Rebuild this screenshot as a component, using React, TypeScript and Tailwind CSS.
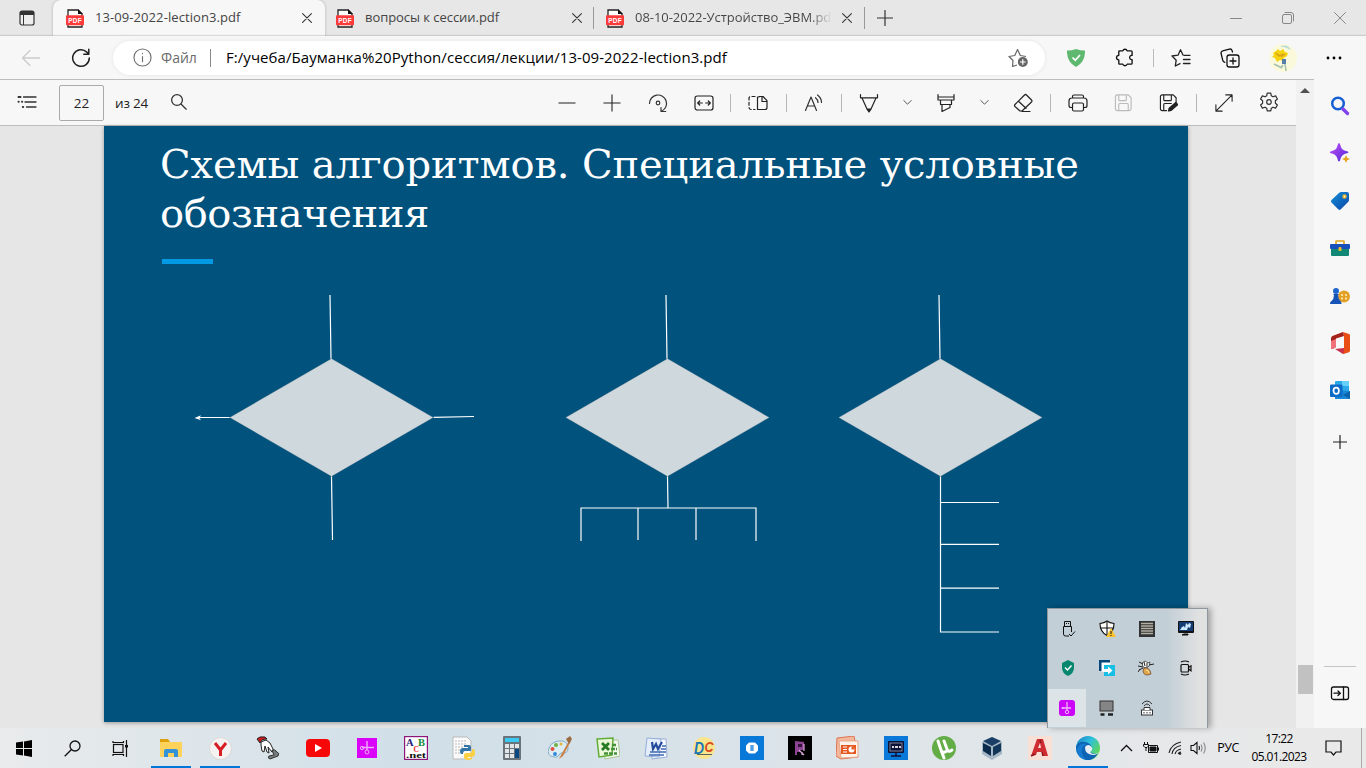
import React from "react";

type IconProps = { children: React.ReactNode; s?: number; c?: string; w?: number; vb?: string; className?: string };

function Ico({ children, s = 20, c = "#333", w = 1.2, vb = "0 0 20 20", className = "" }: IconProps) {
  return (
    <svg width={s} height={s} viewBox={vb} fill="none" stroke={c} strokeWidth={w} strokeLinecap="round" strokeLinejoin="round" className={`shrink-0 ${className}`}>
      {children}
    </svg>
  );
}

function Cell({ className = "", children }: { className?: string; children?: React.ReactNode }) {
  return <div className={`flex h-full shrink-0 items-center justify-center ${className}`}>{children}</div>;
}

function PdfIcon() {
  return (
    <svg width="18" height="19" viewBox="0 0 18 19" className="shrink-0">
      <path d="M2 9V1h10l4 4v4" fill="#fff" stroke="#222" strokeWidth="1.3" />
      <path d="M12 0l5 5h-5z" fill="#111" />
      <path d="M2 15v3h14v-3" fill="#fff" stroke="#222" strokeWidth="1.3" />
      <rect x="0" y="6.3" width="18" height="10" rx="0.8" fill="#fb3a3c" />
      <text x="9" y="13.6" fontSize="6.4" fontWeight="700" textAnchor="middle" fill="#fff" fontFamily="Liberation Sans, sans-serif" textLength="13.500">PDF</text>
    </svg>
  );
}

function Close() {
  return (
    <Ico s={10} vb="0 0 10 10" c="#333" w={1.1}>
      <path d="M.6.6l8.8 8.8M9.4.6L.6 9.4" />
    </Ico>
  );
}

function TabBar() {
  return (
    <div className="flex h-9 shrink-0 bg-[#e7e7e7] text-[13px] text-[#444]">
      <Cell className="w-[53px]">
        <svg width="16" height="16" viewBox="0 0 16 16">
          <rect x="1" y="1" width="14" height="14" rx="2" fill="#fff" fillOpacity=".3" stroke="#333" strokeWidth="1.2" />
          <path d="M1 4V2.500Q1 1 2.500 1h11Q15 1 15 2.500V5H1z" fill="#333" />
          <path d="M4.500 5v10" stroke="#333" />
        </svg>
      </Cell>
      <div className="flex w-[272px] items-center rounded-t-lg bg-[#f7f7f7] pl-[13px] shadow-[0_0_3px_rgba(0,0,0,0.25)]">
        <PdfIcon />
        <span className="ml-[11px] w-[207px] whitespace-nowrap tracking-[0.08px]">13-09-2022-lection3.pdf</span>
        <Close />
      </div>
      <div className="flex w-[268px] items-center pl-[11px]">
        <PdfIcon />
        <span className="ml-[11px] w-[207px] whitespace-nowrap tracking-[-0.05px]">вопросы к сессии.pdf</span>
        <Close />
      </div>
      <div className="my-[7px] w-px bg-[#999]" />
      <div className="flex w-[270px] items-center pl-3">
        <PdfIcon />
        <span className="ml-[11px] mr-[10px] w-[197px] overflow-hidden whitespace-nowrap bg-linear-to-r from-[#444] from-88% to-[#e7e7e7] bg-clip-text tracking-[-0.04px] text-transparent">08-10-2022-Устройство_ЭВМ.pdf</span>
        <Close />
      </div>
      <div className="my-[7px] w-px bg-[#999]" />
      <Cell className="w-[39px]">
        <Ico s={16} vb="0 0 16 16" w={1.2}><path d="M8 .5v15M.5 8h15" /></Ico>
      </Cell>
      <div className="grow" />
      <Cell className="w-[53px]"><Ico s={12} vb="0 0 12 12" c="#888" w={1}><path d="M.5 6.500h11" /></Ico></Cell>
      <Cell className="w-[52px]"><Ico s={12} vb="0 0 12 12" c="#888" w={1}><rect x=".5" y="2.500" width="9" height="9" rx="1.5" /><path d="M3 .5h6Q11.500.5 11.500 3v6" /></Ico></Cell>
      <Cell className="w-[52px]"><Ico s={12} vb="0 0 12 12" c="#888" w={1}><path d="M.5.5l11 11M11.500.5l-11 11" /></Ico></Cell>
    </div>
  );
}

function AddressBar() {
  return (
    <div className="flex h-[43px] shrink-0 items-center bg-[#f7f7f7] shadow-[0_-1px_1px_rgba(0,0,0,0.12)]">
      <Cell className="w-[62px]"><Ico c="#ccc" w={1.3}><path d="M18.500 10H1.500M9 2.500L1.500 10 9 17.500" /></Ico></Cell>
      <Cell className="w-[38px]"><Ico c="#222" w={1.5}><path d="M18.300 10A8.300 8.300 0 1 1 15.800 4.100L17.500 6M17.800 1.200V6.200H12.800" /></Ico></Cell>
      <div className="ml-[13px] flex h-[34px] w-[932px] items-center rounded-full bg-white pl-5 shadow-[0_0_4px_rgba(0,0,0,0.08)]">
        <Ico s={19} c="#707070"><circle cx="10" cy="10" r="9" /><path d="M10 9v5.500M10 5.700v.4" /></Ico>
        <span className="ml-[9px] w-[49px] text-sm text-[#6b6b6b]">Файл</span>
        <div className="h-[18px] w-px bg-[#888]" />
        <span className="ml-[15px] whitespace-nowrap text-[15px] tracking-[0.06px] text-black">F:/учеба/Бауманка%20Python/сессия/лекции/13-09-2022-lection3.pdf</span>
        <svg width="21" height="20" viewBox="0 0 21 20" className="ml-auto mr-4" fill="none" stroke="#666" strokeWidth="1.2" strokeLinejoin="round">
          <path d="M9 17L4.500 18.500 5 12.500 1 8.500 6.800 7.500 9.500 1.500 12.300 7.500 18 8.500" />
          <circle cx="14.800" cy="14" r="5" fill="#666" stroke="none" />
          <path d="M14.800 11.200v5.600M12 14h5.600" stroke="#fff" />
        </svg>
      </div>
      <Cell className="w-[62px]">
        <svg width="18" height="18" viewBox="0 0 18 18">
          <path d="M9 0Q13 1.500 18 1.500Q18.500 13 9 18Q-.5 13 0 1.500Q5 1.500 9 0" fill="#5fb870" />
          <path d="M5.500 8.500L8.300 11.200 13 6" fill="none" stroke="#fff" strokeWidth="1.7" />
        </svg>
      </Cell>
      <Cell className="w-[38px] pr-1"><Ico s={19} c="#111" w={1.4}><path d="M5 3h3.200a2.400 2.400 0 0 1 4.600 0H17q1 0 1 1v3.800h-.8a2.300 2.300 0 0 0 0 4.500H18V16q0 1-1 1h-4.200a2.400 2.400 0 0 1-4.600 0H5q-1 0-1-1v-3.500a2.400 2.400 0 0 1 0-4.800V4q0-1 1-1z" /></Ico></Cell>
      <Cell className="w-4"><div className="h-[18px] w-px bg-[#bbb]" /></Cell>
      <Cell className="w-10"><Ico c="#222" w={1.3}><path d="M12 7L9.500 1.800 7 7.200 1 8 5.200 12.200 4.300 18 9 15.600M13 7.300h6M12.500 11.500h6.500M12.500 15.500h6.500" /></Ico></Cell>
      <Cell className="w-[58px]"><Ico c="#111" w={1.3}><rect x="7" y="7" width="12" height="12" rx="2.3" /><path d="M13 10v6M10 13h6M4.800 14.300Q3 14 2.700 12.200L1.100 5.500Q.7 3.300 2.700 2.800L9.300 1.100Q11.500.6 12.100 2.600L12.500 4" /></Ico></Cell>
      <Cell className="w-12">
        <svg width="28" height="28" viewBox="0 0 28 28">
          <circle cx="14" cy="14" r="14" fill="#fbf9dc" />
          <path d="M11 3Q18-1 22 6L15 3z" fill="#b9dcd3" />
          <path d="M4 9l3-2 2-2 2 2 3-2 2 3 3 1-1 3-3 2-1 3-3-1-3 2-2-4-3-1 2-2z" fill="#f4d411" />
          <path d="M7 9l3 3 4-2M12 13l4-3" stroke="#d89c19" strokeWidth="1.3" fill="none" />
          <path d="M13 15l4 0 0 5-4 0z" fill="#587dad" />
          <path d="M16 20l1 7M5 20l8 4M14 21l-2 3" stroke="#a3bfae" strokeWidth="1.500" />
        </svg>
      </Cell>
      <Cell className="w-[54px]"><svg width="16" height="4"><circle cx="2" cy="2" r="1.400" /><circle cx="8" cy="2" r="1.400" /><circle cx="14" cy="2" r="1.400" /></svg></Cell>
    </div>
  );
}

function Sep() {
  return <div className="h-[18px] w-px bg-[#b5b5b5]" />;
}

function Chevron() {
  return <Ico s={9} vb="0 0 9 9" c="#555" w={1}><path d="M.8 2.500l3.700 3.700L8.200 2.500" /></Ico>;
}

function PdfToolbar() {
  return (
    <div className="flex h-[47px] w-[1296px] shrink-0 items-center border-y border-[#bdbdbd] bg-[#f7f7f7] text-[13.500px] text-[#222]">
      <Cell className="w-[54px] pb-0.5"><Ico c="#333" w={1.3}><path d="M6.500 5h12.500M8 10h11M9.500 15h9.500" /><path d="M1.500 5h2M1.500 9.800h.2M5 9.800h.2M5.800 15h.4" strokeWidth="2" /></Ico></Cell>
      <div className="ml-[5px] flex h-9 w-[45px] items-center justify-center rounded-[2px] border border-[#aaa] pt-0.5">22</div>
      <span className="ml-[11px] w-11 whitespace-nowrap pt-0.5 tracking-[-0.2px]">из 24</span>
      <Cell className="w-10 pb-0.5"><Ico s={18} w={1.400}><circle cx="7.800" cy="7.800" r="6" /><path d="M12.200 12.200L18 18" /></Ico></Cell>
      <div className="grow" />
      <Cell className="w-[50px]"><Ico s={18} c="#222"><path d="M1 10h18" /></Ico></Cell>
      <Cell className="w-10"><Ico s={18} c="#222"><path d="M1 10h18M10 1v18" /></Ico></Cell>
      <Cell className="w-[51px]"><Ico><path d="M1.500 10.500A8.500 8.500 0 1 1 14 18M17.700 18.500H13v-4" /><circle cx="10" cy="10" r="1.800" /></Ico></Cell>
      <Cell className="w-[41px]"><Ico c="#222"><rect x="1" y="3" width="18" height="14" rx="2.300" /><path d="M8.300 10H3.800M5.700 8L3.700 10l2 2M11.700 10h4.500M14.300 8l2 2-2 2" /></Ico></Cell>
      <Cell className="w-[13px]"><Sep /></Cell>
      <Cell className="w-[42px]"><Ico c="#222"><path d="M9.500 4H11V3.500h4L19 7.700v6.800q0 2-2 2H9.500zM14 3.700V8.500h5" /><path d="M7 3.500H3Q1 3.500 1 5.500v9q0 2 2 2h4" strokeDasharray="3 2.300" /></Ico></Cell>
      <Cell className="w-[14px]"><Sep /></Cell>
      <Cell className="w-[42px]"><Ico><path d="M1.500 17.500L7 4l5.500 13.500M3.400 13h7.200M11.500 4.700q2.500 2 2.500 4.800M13.500 2q4 3 4 7.500" /></Ico></Cell>
      <Cell className="w-3"><Sep /></Cell>
      <Cell className="w-11"><Ico c="#222"><path d="M1.500 1.500v3.300h17V1.500M3 5l5 11h4L17 5" /><path d="M8.200 16.500h3.600L10 19z" fill="#333" /></Ico></Cell>
      <Cell className="w-8"><Chevron /></Cell>
      <Cell className="w-[46px]"><Ico c="#222"><path d="M2 1.500V7h16V1.500M4.500 7v4.500h11V7M2.500 4h15M6 11.500V18.500l8-4v-3" /></Ico></Cell>
      <Cell className="w-[31px]"><Chevron /></Cell>
      <Cell className="w-[45px]"><Ico c="#222"><path d="M2 11.500L11.500 2q1-1 2 0l5 5q1 1 0 2L9 18H7L2 13.500q-1-1 0-2zM5.500 8.300l7.500 7M9 18.500h8" /></Ico></Cell>
      <Cell className="w-[11px]"><Sep /></Cell>
      <Cell className="w-11"><Ico c="#222"><path d="M4.500 5V3.500Q4.500 2 6 2h8q1.500 0 1.500 1.500V5M4.500 14.500H3q-2 0-2-2V8q0-3 3-3h12q3 0 3 3v4.500q0 2-2 2h-1.500" /><rect x="4.500" y="10" width="11" height="8" rx="1.500" /></Ico></Cell>
      <Cell className="w-[47px]"><Ico s={19} c="#bbb"><path d="M3.500 2H15l3 3v11.500q0 2-2 2H3.500q-2 0-2-2V4q0-2 2-2zM5 2v5q0 1 1 1h6q1 0 1-1V2M5 18v-6q0-1 1-1h8q1 0 1 1v6" /></Ico></Cell>
      <Cell className="w-[43px]"><Ico s={19} c="#222"><path d="M8 18.500H3.500q-2 0-2-2V4q0-2 2-2H15l3 3v5M5 2v5q0 1 1 1h6q1 0 1-1V2M5 18v-6q0-1 1-1h7" /><path d="M10 19l.7-3 7-6 2.200 2.300-7 6z" fill="#222" /></Ico></Cell>
      <Cell className="w-[13px]"><Sep /></Cell>
      <Cell className="w-[41px]"><Ico s={18} c="#222"><path d="M1 19L19 1M12 1h7v7M1 12v7h7" /></Ico></Cell>
      <Cell className="mr-0.5 w-[50px] pb-0.5"><Ico c="#333"><path d="M8.200 1.200h3.600l.5 2.600 1.700 1 2.600-.9 1.800 3.100-2 1.800v2.400l2 1.800-1.800 3.100-2.600-.9-1.700 1-.5 2.600H8.200l-.5-2.600-1.700-1-2.600.9L1.600 13l2-1.800V8.800L1.600 7l1.800-3.100 2.600.9 1.700-1z" /><circle cx="10" cy="10" r="2.300" /></Ico></Cell>
    </div>
  );
}

function Diamond({ cx }: { cx: number }) {
  return <path d={`M${cx - 102} 417.500L${cx} 358.500L${cx + 102} 417.500L${cx} 476.500z`} fill="#cfd8dd" stroke="#0a4568" strokeOpacity="0.45" strokeWidth="0.8" />;
}

function Slide() {
  return (
    <div className="ml-[104px] h-[596px] w-[1084px] shrink-0 bg-[#01527d] shadow-[0_1px_4px_rgba(0,0,0,0.35)]">
      <div className="h-[159px] pl-14 pt-[14px] text-white">
        <h1 className="whitespace-nowrap font-['Roboto_Slab','DejaVu_Serif',serif] text-[40px] leading-[49px]">
          <span className="block tracking-[-0.13px]">Схемы алгоритмов. Специальные условные</span>
          <span className="block tracking-[-0.4px]">обозначения</span>
        </h1>
        <div className="ml-0.5 mt-[21px] h-[5px] w-[51px] bg-[#0399e4]" />
      </div>
      <svg width="1084" height="437" viewBox="104 285 1084 437" fill="none" stroke="#fff" strokeWidth="1.200">
        <path d="M330 295L331 359M331.500 476L332.500 540M433.500 417.300L474 416.500M232 417.500H198" />
        <path d="M194.500 418l6.500-2.700-1.700 2.700 1.700 2.300z" fill="#fff" stroke="none" />
        <path d="M666 295L667 359M667.500 476L668 508M581 541V508H756V541M638 508v32M696 508v32" />
        <path d="M939 295L940 359M940.500 476V632H999M940.500 502.500H999M940.500 544.300H999M940.500 588.200H999" />
        <Diamond cx={331.5} />
        <Diamond cx={667.5} />
        <Diamond cx={940.5} />
      </svg>
    </div>
  );
}

function Sidebar() {
  return (
    <div className="flex w-[52px] shrink-0 flex-col items-center bg-[#f7f7f7] pt-[3px]">
      <Cell className="h-[47px]!">
        <svg width="20" height="20" viewBox="0 0 20 20" fill="none"><circle cx="8" cy="7.500" r="5.800" stroke="#1760d3" strokeWidth="2.500" /><path d="M13 13l4.500 4.500" stroke="#8143ee" strokeWidth="3.300" strokeLinecap="round" /></svg>
      </Cell>
      <Cell className="h-12!">
        <svg width="20" height="20" viewBox="0 0 20 20"><defs><linearGradient id="sp" x2="1" y2="1"><stop stopColor="#c44cf4" /><stop offset="1" stopColor="#4c2bd9" /></linearGradient></defs><path d="M9 0q1 0 1.500 2.500Q11.500 7 16 8q2.500.5 2.500 1.300T16 10.500Q11.500 11.500 10.500 16 10 18.500 9 18.500T7.500 16Q6.500 11.500 2 10.500-.3 10-.3 9.300T2 8Q6.500 7 7.500 2.500 8 0 9 0" fill="url(#sp)" /><path d="M16 12l1.200 2.800L20 16l-2.800 1.200L16 20l-1.200-2.800L12 16l2.800-1.200z" fill="#e5a51c" /></svg>
      </Cell>
      <Cell className="h-12! pb-px">
        <svg width="20" height="20" viewBox="0 0 20 20"><defs><linearGradient id="tag" x2="1" y2="1"><stop stopColor="#1690d8" /><stop offset="1" stopColor="#0b45a7" /></linearGradient></defs><path d="M11 1h6q2 0 2 2v6q0 1-.7 1.700l-7.500 7.500q-1.300 1.300-2.600 0l-6.700-6.700q-1.300-1.300 0-2.500L9.500 1.500Q10 1 11 1" fill="url(#tag)" /><circle cx="14.500" cy="5.500" r="1.500" fill="#fff" stroke="#e9b82f" strokeWidth="1.500" /></svg>
      </Cell>
      <Cell className="h-[47px]! pb-px">
        <svg width="20" height="18" viewBox="0 0 20 18"><path d="M6 5V2.500Q6 2 6.500 2h7q.5 0 .5.500V5" fill="none" stroke="#dda521" strokeWidth="1.600" /><rect x="1" y="8" width="18" height="9" rx="1" fill="#118875" /><rect x="0" y="5" width="20" height="5" rx="1" fill="#1750ba" /><rect x="8.500" y="8" width="3" height="4" rx="1" fill="#f0b72d" /></svg>
      </Cell>
      <Cell className="h-[47px]!">
        <svg width="20" height="18" viewBox="0 0 20 18"><circle cx="14" cy="9.500" r="6" fill="#e3a028" /><g fill="#fff0b5"><circle cx="12" cy="8" r="1" /><circle cx="16" cy="8" r="1" /><circle cx="12" cy="11.500" r="1" /><circle cx="16" cy="11.500" r="1" /></g><circle cx="6" cy="4" r="3" fill="#1d65cd" /><path d="M3.500 7h5v1H8q.2 4 2.500 6 1 .5 1 3H0Q0 14.500 1.500 14 4 12 4 8h-.5z" fill="#1553b7" /></svg>
      </Cell>
      <Cell className="h-[47px]!">
        <svg width="19" height="22" viewBox="0 0 19 22"><path d="M4 17l9-1 5 4-6 2z" fill="#c92f4d" /><path d="M12 0l6 2q1 .3 1 1.300v15.500q0 1-1 1.200l-6 2 1-4V4z" fill="#e94e14" /><path d="M12 0L2 3.800Q0 4.500 0 6.500v9Q0 17.500 1.500 17L4 15.800q1-.5 1-1.800V6.500L13 4z" fill="#a32219" /><path d="M0 9v6.500Q0 17.500 1.500 17L4 15.800q1-.5 1-1.800V7z" fill="#f0707c" /></svg>
      </Cell>
      <Cell className="h-[47px]!">
        <svg width="20" height="20" viewBox="0 0 20 20"><rect x="5" y="1" width="14" height="17" rx="1" fill="#29a8ea" /><rect x="12" y="1" width="7" height="5" fill="#65d0fa" /><path d="M5 10l15 1v7q0 1-1 1H5z" fill="#1688d6" /><path d="M20 11l-7 4 7 4z" fill="#0d62ac" /><rect x="0" y="4.500" width="12.500" height="12.500" rx="1" fill="#0b6bc6" /><ellipse cx="6.200" cy="10.700" rx="2.700" ry="3.100" fill="none" stroke="#fff" strokeWidth="1.700" /></svg>
      </Cell>
      <Cell className="h-[57px]!"><Ico s={14} vb="0 0 14 14" c="#222" w={1.200}><path d="M7 .5v13M.5 7h13" /></Ico></Cell>
      <div className="grow" />
      <div className="h-px w-8 bg-[#c5c5c5]" />
      <Cell className="mb-[10px] h-[51px]!">
        <Ico s={20} c="#111" w={1.300}><rect x="1.500" y="4" width="17" height="12.500" rx="2" /><path d="M13.500 4v12.500M4 10.200h6M8 8l2.300 2.200L8 12.500" /></Ico>
      </Cell>
    </div>
  );
}

function TrayPopup() {
  return (
    <div className="absolute left-[1047px] top-[608px] grid h-[120px] w-[161px] grid-cols-4 grid-rows-3 border border-b-0 border-[#8f979c] bg-linear-to-r from-[#c3cfd7] from-75% to-[#e0e1e1] to-95% pr-px shadow-[3px_0_6px_rgba(0,0,0,0.3)]">
      <Cell>
        <svg width="16" height="18" viewBox="0 0 16 18" fill="none" stroke="#111"><path d="M4.500 6V1.500h6V6M3.500 6.500h8V12M3.500 6.500V14q0 2 2 2H9M6.500 3v1M8.500 3v1M9 14l2 2 4-4.500" /></svg>
      </Cell>
      <Cell>
        <svg width="17" height="17" viewBox="0 0 17 17"><path d="M8 1Q10.500 3 15 3.500 15 12 8 15.500 1 12 1 3.500 5.500 3 8 1z" fill="#fff" stroke="#111" strokeWidth="1.100" /><path d="M8 2v13M1.500 8h13" stroke="#111" strokeWidth="1.100" /><path d="M12 8l5 9H7z" fill="#fdc22c" /><path d="M12 11v3M12 15v1" stroke="#111" /></svg>
      </Cell>
      <Cell>
        <svg width="16" height="16"><rect width="16" height="16" fill="#333" /><path d="M2 2.500h12M2 5h12M2 7.500h12M2 10h12M2 12.500h12" stroke="#b1aea4" strokeWidth="1.300" /></svg>
      </Cell>
      <Cell>
        <svg width="16" height="15"><rect width="16" height="12" rx="1" fill="#111" /><rect x="1" y="1" width="14" height="9" fill="#163d73" /><path d="M2 9l2-3 2-1 1 2 1-5 2 2 1-2 2 1-1 4-2-1-1 3z" fill="#cceaff" /><path d="M6 13h4v1H4z" stroke="#111" /></svg>
      </Cell>
      <Cell>
        <svg width="14" height="16" viewBox="0 0 14 16"><path d="M7 0l6 3v5q0 5-6 8-6-3-6-8V3z" fill="#07876f" /><path d="M4 7.500L6.500 10 10.500 5.500" stroke="#fff" strokeWidth="1.400" fill="none" /></svg>
      </Cell>
      <Cell>
        <svg width="16" height="16"><rect width="11" height="11" fill="#07477a" /><rect x="2.500" y="2.500" width="9" height="9" fill="#fff" /><path d="M5 5h11v11H5z" fill="#16bfe3" /><path d="M4 9h5V6.500l4.500 4-4.500 4V12H4z" fill="#fff" /></svg>
      </Cell>
      <Cell>
        <svg width="17" height="17" viewBox="0 0 17 17"><path d="M4 3l3-2 3 2 2-1-1 4-2 2-4-1z" fill="#fff" stroke="#222" strokeWidth=".7" /><path d="M1 2l4 2M0 6l5 1M1 10l4-2M11 5l5-1M2 9l-2 3M6 2l1 4M9 3v4" stroke="#222" strokeWidth="1" /><path d="M6 8q6-1 7 6-7 3-8-3z" fill="#e0a54d" stroke="#65401c" strokeWidth=".7" /><path d="M8 10q3 0 3 3" stroke="#ffe6a2" fill="none" /></svg>
      </Cell>
      <Cell>
        <svg width="14" height="16" viewBox="0 0 14 16" fill="none" stroke="#111" strokeWidth="1.200"><rect x="2" y="4.500" width="7.500" height="7.500" rx="1" /><path d="M9.500 7.500l2.500-1.700v5L9.500 9M2 2q4-2 8 0M2 14q4 2 8 0" /></svg>
      </Cell>
      <Cell className="mb-px h-[38px]! w-[38px] self-end bg-[#dce4e8]">
        <svg width="16" height="16" viewBox="0 0 16 16"><rect width="16" height="16" rx="3" fill="#cb06f9" /><path d="M8 2v8M3 8h9" stroke="#f0b7ff" strokeWidth="1.300" /><circle cx="8" cy="12" r="1.700" fill="none" stroke="#f0b7ff" /><circle cx="3.500" cy="8" r="1" fill="#f0b7ff" /></svg>
      </Cell>
      <Cell>
        <svg width="16" height="17"><rect x="1" y="1" width="13" height="10" fill="#858585" stroke="#333" /><path d="M1.500 14.500h4M9 14.500h5" stroke="#222" strokeWidth="2.300" /></svg>
      </Cell>
      <Cell>
        <svg width="14" height="18" viewBox="0 0 14 18" fill="none" stroke="#333"><path d="M2 5q5-6 10 0M4 7q3-4 6 0" /><rect x="1.500" y="11" width="11" height="5" fill="#fff" /><path d="M4 11V8.500h6V11" fill="#fff" /><path d="M4 13v1.500M7 13v1.500M10 13v1.500" /></svg>
      </Cell>
    </div>
  );
}

function TaskIcon({ active = false, className = "", children }: { active?: boolean; className?: string; children: React.ReactNode }) {
  return (
    <div className={`flex h-10 w-12 shrink-0 flex-col items-center ${className}`}>
      <div className="flex h-[38px] items-center pt-[2px]">{children}</div>
      {active && <div className="h-0.5 w-10 bg-[#0277d7]" />}
    </div>
  );
}

function Taskbar() {
  return (
    <div className="flex h-10 shrink-0 bg-linear-to-r from-[#e9ebec] via-[#d0dfe8] via-30% to-[#e9e9e9] to-95% text-black">
      <TaskIcon><svg width="16" height="17" viewBox="0 0 16 17"><path d="M0 2.500l7-1V8H0zM8 1.400L16 0v8H8zM0 9h7v6.500l-7-1zM8 9h8v8l-8-1.400z" /></svg></TaskIcon>
      <TaskIcon><svg width="17" height="17" viewBox="0 0 17 17" fill="none" stroke="#111" strokeWidth="1.300"><circle cx="11" cy="6" r="5" /><path d="M7.500 9.500L.7 16.300" /></svg></TaskIcon>
      <TaskIcon><svg width="17" height="17" viewBox="0 0 17 17" fill="none" stroke="#111" strokeWidth="1.200"><rect x="1.500" y="4.500" width="9.500" height="8" /><path d="M1 1v1.500h10.500V1M1 16v-1.500h10.500V16M14.500 0v17" /><path d="M14.500 5v2.500" strokeWidth="3" /></svg></TaskIcon>
      <TaskIcon active className="ml-[3px]"><svg width="22" height="19" viewBox="0 0 22 19"><path d="M0 0h8l2 3v14H0z" fill="#dda10b" /><rect x="0" y="3" width="22" height="15" rx="1" fill="#ffd35b" /><path d="M4 18v-6q0-2 2-2h10q2 0 2 2v6h-4v-4H8v4z" fill="#3493d8" /></svg></TaskIcon>
      <TaskIcon active className="ml-px"><svg width="23" height="23" viewBox="0 0 23 23"><circle cx="11.500" cy="11.500" r="11" fill="#f5f3f2" stroke="#d9d8d7" /><path d="M6 6l5.500 7L17 6M11.500 13v6" fill="none" stroke="#d71e25" strokeWidth="3" /></svg></TaskIcon>
      <TaskIcon><svg width="24" height="24" viewBox="0 0 24 24"><path d="M1 3q2-3 8-2l2 2q-6 0-7 4z" fill="#d01a21" stroke="#222" /><path d="M5 6l5-2 4 3 4 8-2 1-4-5 1 6-2-1-2-6-1 6-2-1-1-6z" fill="#fff" stroke="#222" /><path d="M16 14q3-1 5 2 3 1 1 4l-8 3q-3-1-1-3l5-1z" fill="#777c7d" stroke="#333" /></svg></TaskIcon>
      <TaskIcon className="ml-0.5"><svg width="24" height="18" viewBox="0 0 24 18"><rect width="24" height="18" rx="4" fill="#f60808" /><path d="M9 5l7 4-7 4z" fill="#fff" /></svg></TaskIcon>
      <TaskIcon className="ml-px"><svg width="20" height="20" viewBox="0 0 20 20"><rect x="0" width="20" height="20" fill="#db02fa" /><path d="M10 3v9M5 9.500h12" stroke="#ecadff" strokeWidth="1.400" /><circle cx="10" cy="14" r="2" stroke="#ecadff" fill="none" /><circle cx="5" cy="10" r="1.700" stroke="#ecadff" fill="none" /></svg></TaskIcon>
      <TaskIcon className="ml-px">
        <svg width="24" height="24" viewBox="0 0 24 24" fontFamily="Liberation Serif, serif" fontWeight="700"><rect x=".6" y=".6" width="22.800" height="22.800" fill="#fff" stroke="#8c1777" strokeWidth="1.200" /><text x="2" y="9.500" fontSize="10.500" fill="#211a78">A</text><text x="14" y="9.500" fontSize="10.500" fill="#118b39">B</text><text x="9.500" y="16" fontSize="7.500" fill="#e6251f">C</text><text x="2" y="22" fontSize="8" fill="#111" textLength="20" lengthAdjust="spacingAndGlyphs">.net</text></svg>
      </TaskIcon>
      <TaskIcon><svg width="24" height="24" viewBox="0 0 24 24"><path d="M1 1h14l4 4v18H1z" fill="#fafafa" stroke="#bbb" /><path d="M3 5h12M3 8h11M3 11h8M3 14h6M3 17h5" stroke="#bbb" strokeDasharray="2 1" /><path d="M12 9h5q2 0 2 2v3q0 1-1 1h-5q-2 0-2 3H9q-1-1-1-3t2-3h6v-1h-4z" fill="#3476a8" /><path d="M20 13h1q2 0 2 4t-3 4h-4v1h4v1q-1 1-4 1t-4-2v-3q0-2 2-2h4q2 0 2-3z" fill="#fbd142" /></svg></TaskIcon>
      <TaskIcon><svg width="18" height="24" viewBox="0 0 18 24"><rect width="18" height="24" rx="1" fill="#6a737a" /><rect x="2" y="2" width="14" height="4" fill="#39c8f1" /><path d="M2 8h4v4H2zM7 8h4v4H7zM12 8h4v4h-4zM2 13h4v4H2zM7 13h4v4H7zM2 18h4v4H2zM7 18h4v4H7z" fill="#e3e6e8" /><path d="M12 13h4v9h-4z" fill="#0a487f" /></svg></TaskIcon>
      <TaskIcon><svg width="24" height="24" viewBox="0 0 24 24"><path d="M15 5Q4 4 1 12t5 9q4 1 5-2t5-2q4 0 4-5T15 5" fill="#dcecf3" stroke="#88adc3" /><circle cx="8" cy="9" r="2" fill="#6faf43" /><circle cx="13" cy="8" r="1.500" fill="#e6b432" /><circle cx="4.500" cy="13" r="2" fill="#e35040" /><circle cx="7" cy="18" r="2" fill="#338bdc" /><path d="M22 3l-9 16-2 4 4-3 8-15z" fill="#cb8048" /><path d="M18 3l4-3 2 3-3 5z" fill="#9a6a42" /></svg></TaskIcon>
      <TaskIcon><svg width="24" height="23" viewBox="0 0 24 23"><path d="M7 3h15l2 16-15 3z" fill="#f3f8ee" stroke="#abc695" /><path d="M1 2l16-1-1 17-13 2z" fill="#e9f7d8" stroke="#62ad37" strokeWidth="1.500" /><path d="M6 6l7 7M13 6l-7 7" stroke="#267b22" strokeWidth="2.800" /><path d="M16 8h5M15 12h6M8 16.500h13" stroke="#459137" strokeWidth="2.600" strokeDasharray="4 1" /></svg></TaskIcon>
      <TaskIcon><svg width="24" height="23" viewBox="0 0 24 23"><path d="M8 2h14l1 18-15 2z" fill="#f6f9ff" stroke="#98aed3" /><path d="M3 1l14 1-2 18-14-1z" fill="#e4edfb" stroke="#95aeda" /><path d="M8 5l1 7 3-5 2 5 4-7" fill="none" stroke="#244b9b" strokeWidth="2.200" /><path d="M18 9h4M17 12h5M6 15h16M5 18h15" stroke="#426ab1" strokeWidth="1.500" /></svg></TaskIcon>
      <TaskIcon><svg width="24" height="24" viewBox="0 0 24 24" fontFamily="Liberation Sans, sans-serif" fontStyle="italic" fontWeight="700"><circle cx="12" cy="12" r="11" fill="#f8e58d" /><text x="2" y="18" fontSize="16" fill="#1977ba" textLength="10" lengthAdjust="spacingAndGlyphs">D</text><text x="12.500" y="16" fontSize="14" fill="#de4a21" textLength="9" lengthAdjust="spacingAndGlyphs">C</text><path d="M5 18.500h15" stroke="#345" strokeWidth=".8" /></svg></TaskIcon>
      <TaskIcon><svg width="24" height="24" viewBox="0 0 24 24"><rect width="24" height="24" fill="#0878d9" /><path d="M9 6.500h6l3 3v5l-3 3H9l-3-3v-5z" fill="#fff" /><path d="M10.500 9h3v6h-3z" fill="#0878d9" /><path d="M12 9v6" stroke="#fff" strokeWidth=".6" /></svg></TaskIcon>
      <TaskIcon><svg width="24" height="24" viewBox="0 0 24 24"><rect width="24" height="24" /><path d="M7 5l9 1v8h-4v2H9v3H7z" fill="#8d4394" /><path d="M10 8h4v3h-4z" fill="#34123b" /><path d="M11 14l5 5M14 16v3M16 8v7" stroke="#d5a6d8" strokeWidth="1.200" /></svg></TaskIcon>
      <TaskIcon><svg width="24" height="24" viewBox="0 0 24 24"><path d="M1 2L18 0l4 21-17 2-5-3z" fill="#f3b79b" stroke="#dd7452" /><path d="M3 5h19v16L5 22z" fill="#fff4eb" stroke="#e6a78c" /><path d="M5 9h15v9H5z" fill="#e65722" /><path d="M7 11h4M7 13.500h4M7 16h4" stroke="#fff" /><circle cx="15.500" cy="13.500" r="3" fill="#fff" /><path d="M15.500 13.500v-3a3 3 0 0 1 3 3z" fill="#e65722" /></svg></TaskIcon>
      <TaskIcon><svg width="24" height="24" viewBox="0 0 24 24"><rect width="24" height="24" fill="#0878d9" /><rect x="4" y="5" width="16" height="12" rx="1" fill="#0a1237" /><rect x="6" y="7" width="12" height="8" fill="none" stroke="#9f9fac" strokeWidth=".8" /><path d="M8 11h2M11 11h3M15 11h2" stroke="#dcd4df" strokeWidth="2" /><path d="M12 17v3M7 20h10" stroke="#0a1237" strokeWidth="1.500" /></svg></TaskIcon>
      <TaskIcon><svg width="24" height="24" viewBox="0 0 24 24"><circle cx="12" cy="12" r="12" fill="#62ad45" /><path d="M6 5l3 9q1 3 4 2t2-3l-3-8M15 13q1 4 5 1M9 14l3 8" fill="none" stroke="#fff" strokeWidth="3" strokeLinecap="round" /></svg></TaskIcon>
      <TaskIcon><svg width="22" height="24" viewBox="0 0 22 24"><path d="M11 1l10 5v12l-10 6L1 18V6z" fill="#a6b7c5" /><path d="M11 1l9 4-9 5L2 5z" fill="#1a3e65" /><path d="M2 7l8 4v9l-8-5z" fill="#0b2b4d" /><path d="M12 11l8-4v8l-8 5z" fill="#123659" /></svg></TaskIcon>
      <TaskIcon><svg width="24" height="24" viewBox="0 0 24 24"><rect width="24" height="24" fill="#f8e0d7" /><path d="M3 20L9 3h6l5 17h-5l-1-4H9l-1 3zM10 12h3l-1-5z" fill="#cf2c31" fillRule="evenodd" /><path d="M3 20l4-2M15 20l-1-4M13 7l-1-3" fill="none" stroke="#8f151b" strokeWidth="1.500" /></svg></TaskIcon>
      <TaskIcon active>
        <svg width="24" height="24" viewBox="0 0 24 24"><defs><linearGradient id="eg" x2="1" y2=".7"><stop stopColor="#147cc6" /><stop offset=".5" stopColor="#2fc0dc" /><stop offset="1" stopColor="#66d948" /></linearGradient></defs><circle cx="12" cy="12" r="12" fill="url(#eg)" /><path d="M0 11Q2 5 9 6q6 1 7 6 0 2-2 4 4 3 8 1-4 8-12 7Q0 21 0 11" fill="#0d64b4" /><path d="M13 9q4 2 3 5-1 2-2 2 3 4 9 0-2 3-6 3-8-1-8-7 0-3 4-3" fill="#e5eff5" /><path d="M6 17q-1-7 5-9-8-1-10 5 0 10 10 11-4-2-5-7" fill="#167bd0" /></svg>
      </TaskIcon>
      <Cell className="ml-[3px] w-6"><svg width="14" height="9"><path d="M1 7l5.500-5.500L12 7" fill="none" stroke="#111" strokeWidth="1.300" /></svg></Cell>
      <Cell className="w-6"><svg width="17" height="14" viewBox="0 0 17 14" fill="none" stroke="#111"><path d="M5.500 4.500h9v7h-9z" /><path d="M7 6h6v4H7z" fill="#111" /><path d="M15.500 6.500v3" /><path d="M1.500 1v2M4.500 1v2M.5 3.500h5v1.500L4 6.500H2L.5 5zM3 7v3" /></svg></Cell>
      <Cell className="w-6"><svg width="14" height="14" viewBox="0 0 14 14" fill="none" stroke="#222" strokeWidth="1.100"><path d="M1 12Q3 3 13 1M4 13Q5 6 13 4.500M7 13Q8 9 13 8M10 13q1-2 3-2" /><circle cx="12" cy="12.500" r=".8" fill="#222" /></svg></Cell>
      <Cell className="w-[23px]"><svg width="17" height="14" viewBox="0 0 17 14" fill="none" stroke="#111" strokeWidth="1.100"><path d="M1 4.500h2.500L7 1.500v11L3.500 9.500H1zM9 5q1 2 0 4" /><path d="M11 3.500q2 3.500 0 7M13.500 1.500q3.500 5.500 0 11" stroke="#888" /></svg></Cell>
      <Cell className="w-9 text-[12.500px] tracking-[-0.5px]">РУС</Cell>
      <div className="ml-[3px] flex w-[60px] flex-col items-center whitespace-nowrap pt-[2px] text-xs leading-[18px] tracking-[-0.6px]"><span>17:22</span><span>05.01.2023</span></div>
      <Cell className="ml-[7px] w-[34px]"><svg width="17" height="16" viewBox="0 0 17 16" fill="none" stroke="#111" strokeWidth="1.200"><path d="M1 1h15v11H11l-2.500 3L6 12H1z" /></svg></Cell>
      <div className="ml-auto mr-1 w-px bg-[#aaa]" />
    </div>
  );
}

export default function App() {
  return (
    <div className="relative flex h-[768px] w-[1366px] flex-col overflow-hidden bg-[#f7f7f7] font-['Segoe_UI','Open_Sans','Noto_Sans',sans-serif]">
      <TabBar />
      <AddressBar />
      <div className="flex h-[649px] shrink-0">
        <div className="flex w-[1296px] flex-col overflow-hidden bg-[#e6e6e6]">
          <PdfToolbar />
          <Slide />
        </div>
        <div className="flex w-[18px] flex-col items-center border-t border-[#bdbdbd] bg-[#f1f1f1] pt-2">
          <svg width="10" height="5"><path d="M0 5L5 0l5 5z" fill="#505050" /></svg>
          <div className="mt-auto mb-[34px] h-[29px] w-[15px] bg-[#c1c1c1]" />
        </div>
        <Sidebar />
      </div>
      <Taskbar />
      <TrayPopup />
    </div>
  );
}
